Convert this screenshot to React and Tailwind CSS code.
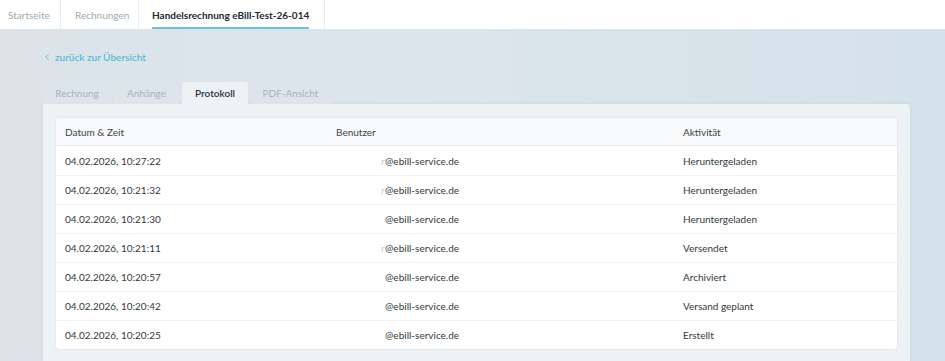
import { FiChevronLeft } from "react-icons/fi";

const rows = [
  { time: "04.02.2026, 10:27:22", pre: "r", activity: "Heruntergeladen" },
  { time: "04.02.2026, 10:21:32", pre: "r", activity: "Heruntergeladen" },
  { time: "04.02.2026, 10:21:30", pre: "", activity: "Heruntergeladen" },
  { time: "04.02.2026, 10:21:11", pre: "r", activity: "Versendet" },
  { time: "04.02.2026, 10:20:57", pre: "", activity: "Archiviert" },
  { time: "04.02.2026, 10:20:42", pre: "", activity: "Versand geplant" },
  { time: "04.02.2026, 10:20:25", pre: "", activity: "Erstellt" },
];

const tabs = ["Rechnung", "Anhänge", "Protokoll", "PDF-Ansicht"];
const tabWidths = ["w-[68px]", "w-[65px]", "w-[66px]", "w-[79px]"];

export default function App() {
  return (
    <div
      className="w-[945px] h-[361px] overflow-hidden bg-gradient-to-r from-[#dce4ea] via-[#dbe5eb] to-[#d4e2e9] text-[10px] leading-[12px]"
      style={{ fontFamily: "Lato, 'Noto Sans', sans-serif" }}
    >
      <div className="h-[29px] bg-white flex items-stretch">
        <div className="px-[8px] flex items-center border-r border-[#eceff1] text-[#a3a9ad] w-[61px]">
          Startseite
        </div>
        <div className="pl-[14px] flex items-center border-r border-[#eceff1] text-[#a3a9ad] w-[78px]">
          Rechnungen
        </div>
        <div className="pl-[13px] pr-[15px] flex items-stretch border-r border-[#eceff1]">
          <div className="flex items-center border-b-2 border-[#6ac3d9] font-bold text-[#222a30] pt-[2px]">
            Handelsrechnung eBill-Test-26-014
          </div>
        </div>
        <div className="flex-1" />
      </div>

      <div className="pl-[43px] pr-[35px]">
        <div className="pt-[22px] pb-[19px] flex items-center text-[#56bcd6] font-semibold">
          <FiChevronLeft className="w-[10px] h-[10px] mr-[3px] -ml-[1px]" />
          zurück zur Übersicht
        </div>

        <div className="flex gap-[3px] h-[22px]">
          {tabs.map((t, i) => (
            <div
              key={t}
              className={`${tabWidths[i]} rounded-t-[3px] flex items-center justify-center ${
                t === "Protokoll"
                  ? "bg-[#edf2f5] text-[#2b3238] font-semibold"
                  : "bg-[#dde5eb] text-[#a9b2b9]"
              }`}
            >
              {t}
            </div>
          ))}
        </div>

        <div className="bg-[#edf2f5] rounded-tr-[3px] shadow-[0_0_3px_rgba(140,160,175,0.25)] px-[13px] pt-[14px] pb-[13px]">
          <div className="bg-white rounded-[4px] shadow-[0_0_2px_rgba(150,165,180,0.25)] overflow-hidden">
            <div className="grid grid-cols-[271px_347px_1fr] px-[9px] h-[28px] items-center bg-[#f8f9fa] text-[#3c4348] border-b border-[#eceff1]">
              <div>Datum &amp; Zeit</div>
              <div>Benutzer</div>
              <div>Aktivität</div>
            </div>
            {rows.map((r, i) => (
              <div
                key={r.time}
                className={`grid grid-cols-[271px_347px_1fr] px-[9px] h-[29px] items-center text-[#33393e] ${
                  i > 0 ? "border-t border-[#f0f2f4]" : ""
                }`}
              >
                <div>{r.time}</div>
                <div className="pl-[45px] flex">
                  <span className="inline-block w-[4px] text-[#c9cdd0]">{r.pre}</span>
                  <span>@ebill-service.de</span>
                </div>
                <div>{r.activity}</div>
              </div>
            ))}
          </div>
        </div>
      </div>
    </div>
  );
}
